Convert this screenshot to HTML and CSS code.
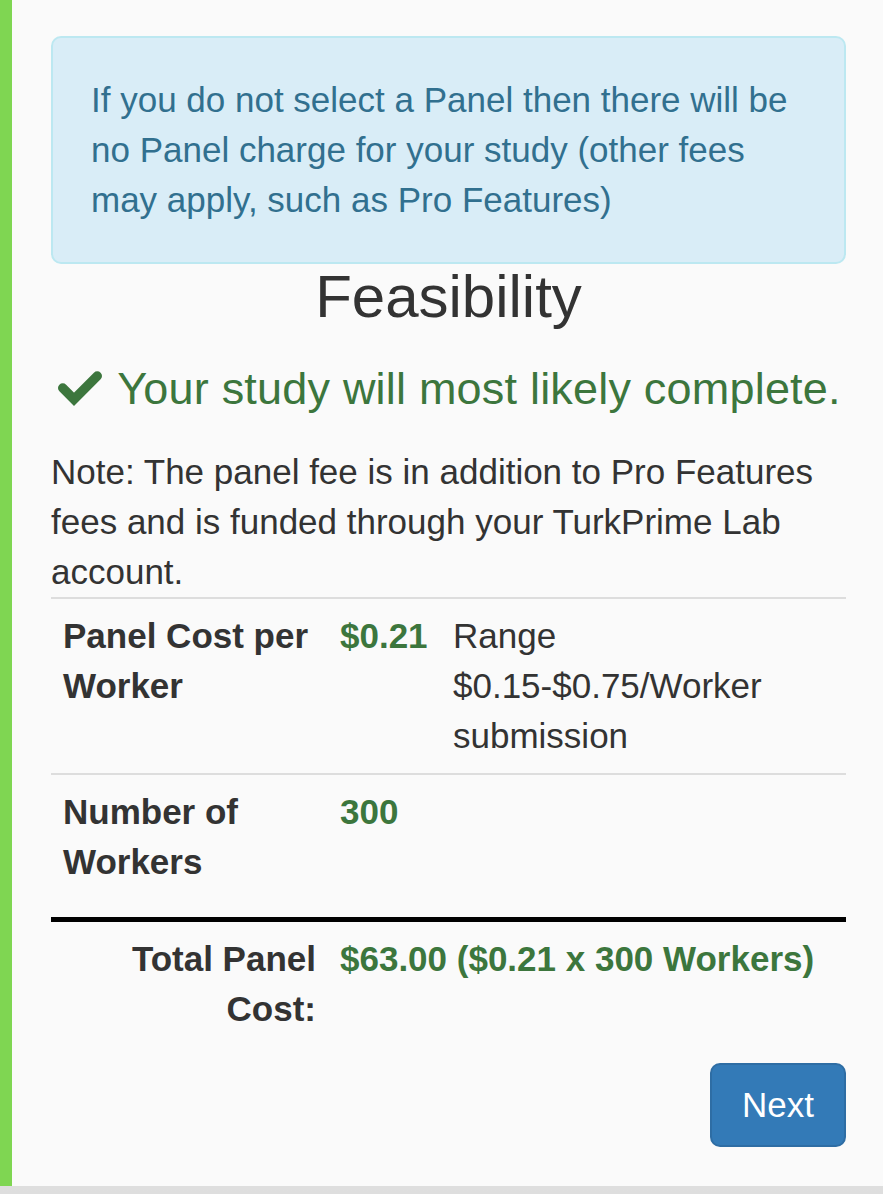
FILE: index.html
```html
<!DOCTYPE html>
<html lang="en">
<head>
<meta charset="utf-8">
<title>Feasibility</title>
<link rel="stylesheet" href="styles.css">
</head>
<body>
<div class="page">
  <div class="accent"></div>
  <main class="content">
    <div class="alert">If you do not select a Panel then there will be no Panel charge for your study (other fees may apply, such as Pro Features)</div>
    <h3 class="title">Feasibility</h3>
    <h4 class="status"><svg class="check" width="48" height="38" viewBox="0 0 48 38" aria-hidden="true"><polyline points="6.75,19 18,30.25 41.25,7" fill="none" stroke="#3c763d" stroke-width="9.5" stroke-linecap="round" stroke-linejoin="miter"/></svg>Your study will most likely complete.</h4>
    <p class="note">Note: The panel fee is in addition to Pro Features fees and is funded through your TurkPrime Lab account.</p>
    <table class="costs">
      <colgroup>
        <col class="c1"><col class="c2"><col class="c3">
      </colgroup>
      <tbody>
        <tr class="row">
          <th>Panel Cost per Worker</th>
          <td class="val">$0.21</td>
          <td>Range <span class="nw">$0.15-$0.75/Worker</span> submission</td>
        </tr>
        <tr class="row">
          <th>Number of Workers</th>
          <td class="val">300</td>
          <td></td>
        </tr>
      </tbody>
      <tfoot>
        <tr class="total">
          <th class="total-label">Total Panel Cost:</th>
          <td class="val" colspan="2">$63.00 ($0.21 x 300 Workers)</td>
        </tr>
      </tfoot>
    </table>
    <div class="actions"><button class="btn" type="button">Next</button></div>
  </main>
</div>
</body>
</html>
```
FILE: styles.css
```css
html, body {
  margin: 0;
  padding: 0;
}
body {
  background: linear-gradient(#dedede, #ececec) #e8e8e8;
  font-family: "Liberation Sans", Arial, sans-serif;
  color: #333;
  font-size: 35px;
  line-height: 50px;
}
.page {
  display: flex;
  background: #fafafa;
  box-shadow: 0 2px 5px rgba(0, 0, 0, 0.06);
}
.accent {
  width: 12px;
  flex: 0 0 12px;
  background: #7fd652;
}
.content {
  flex: 1;
  padding: 36px 37px 39px 39px;
}
.alert {
  background: #d9edf7;
  border: 2px solid #bce8f1;
  border-radius: 10px;
  color: #31708f;
  padding: 37px 38px 37px 38px;
}
.title {
  margin: 0 0 34px;
  font-size: 60px;
  line-height: 66px;
  font-weight: 400;
  text-align: center;
}
.status {
  margin: 0 0 33px;
  font-size: 45px;
  line-height: 49.5px;
  font-weight: 400;
  color: #3c763d;
  text-align: center;
  letter-spacing: 0.2px;
}
.check {
  vertical-align: -3px;
  margin-right: 13px;
}
.note {
  margin: 0;
}
.costs {
  width: 100%;
  border-collapse: collapse;
  table-layout: fixed;
}
.c1 { width: 277px; }
.c2 { width: 113px; }
.costs th, .costs td {
  padding: 12px 12px;
  vertical-align: top;
  text-align: left;
}
.costs th {
  font-weight: 700;
}
.row th, .row td {
  border-top: 2px solid #ddd;
}
.row:last-child th, .row:last-child td {
  padding-bottom: 30px;
}
.val {
  color: #3c763d;
  font-weight: 700;
}
.nw {
  white-space: nowrap;
}
.total th, .total td {
  border-top: 5px solid #000;
}
.costs .total-label {
  text-align: right;
}
.actions {
  display: flex;
  justify-content: flex-end;
  margin-top: 17px;
}
.btn {
  font-family: "Liberation Sans", Arial, sans-serif;
  font-size: 35px;
  line-height: 50px;
  color: #fff;
  background: #337ab7;
  border: 2px solid #2e6da4;
  border-radius: 10px;
  padding: 15px 30px;
  cursor: pointer;
}
```
